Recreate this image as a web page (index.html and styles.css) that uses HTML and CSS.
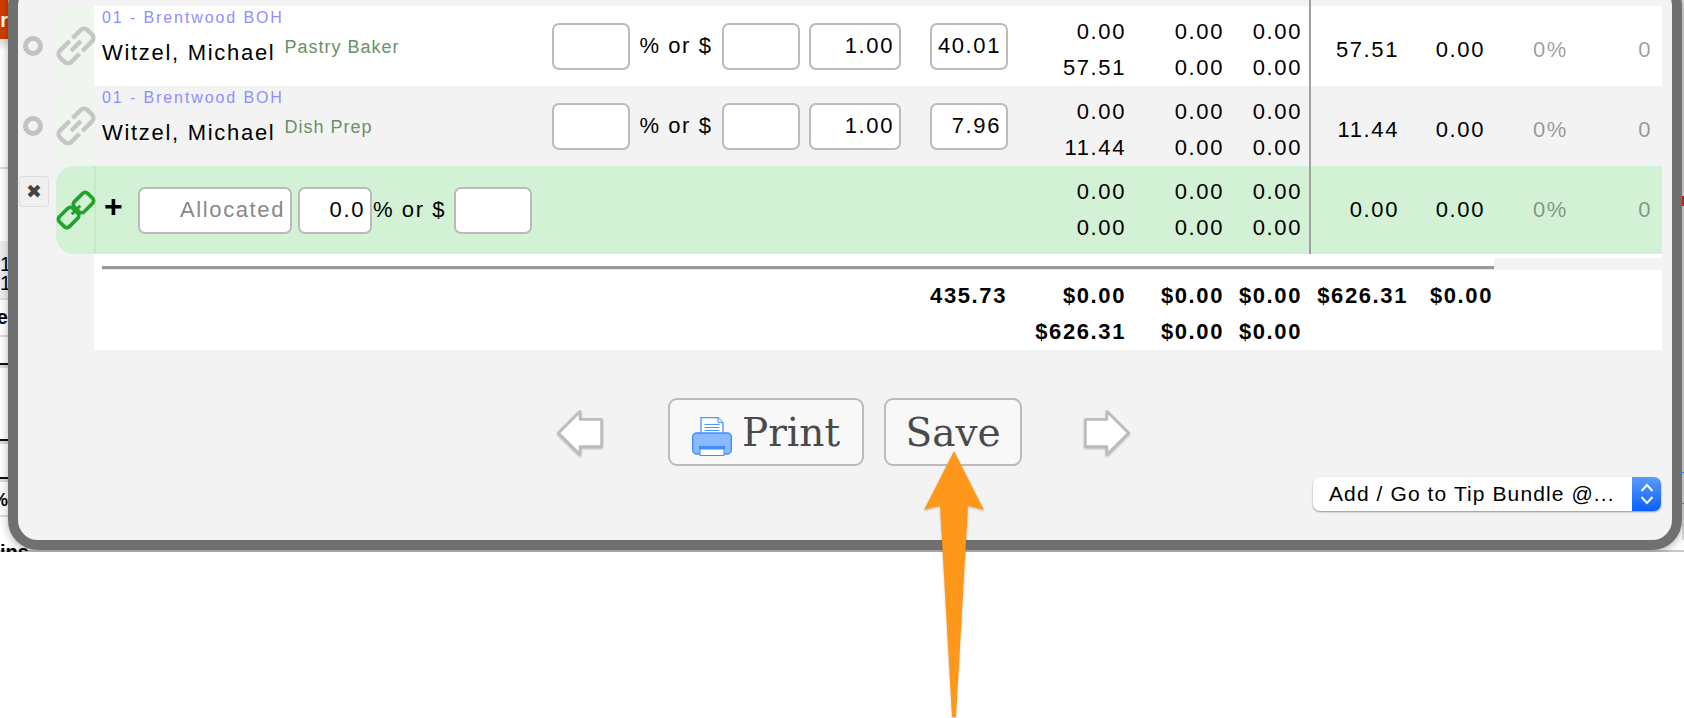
FILE: index.html
```html
<!DOCTYPE html>
<html lang="en">
<head>
  <meta charset="UTF-8" />
  <title>Tip Bundle</title>
  <link rel="stylesheet" href="styles.css">
</head>
<body>
  <!-- page behind the dialog -->
  <div class="page">
    <div class="page-main">
      <div class="strip-left">
        <div class="sl sl-brand">r</div>
        <div class="sl sl-fade"></div>
        <div class="sl sl-blank"></div>
        <div class="sl sl-nums">1<br>1</div>
        <div class="sl sl-head">de</div>
        <div class="sl sl-cell-a"></div>
        <div class="sl sl-cell-b"></div>
        <div class="sl sl-cell-c"></div>
        <div class="sl sl-cell-d"></div>
        <div class="sl sl-pct">%</div>
      </div>
      <div class="strip-right">
        <div class="sr sr-a"></div>
        <div class="sr sr-red"></div>
        <div class="sr sr-b"></div>
        <div class="sr sr-blue"></div>
        <div class="sr sr-c"></div>
      </div>
    </div>
    <div class="page-foot">
      <span class="foot-ins">ins</span>
      <span class="foot-note">Note</span><span class="foot-hrs">Hrs Worked</span>
      <span class="foot-note">Note</span><span class="foot-hrs">Hrs Worked</span>
      <span class="foot-note">Note</span><span class="foot-hrs">Hrs Worked</span>
      <span class="foot-note">Note</span><span class="foot-hrs">Hrs Worked</span>
      <span class="foot-note">Note</span><span class="foot-hrs">Hrs Worked</span>
    </div>

    <!-- dialog -->
    <div class="modal">
      <div class="rows">
        <div class="divider"></div>

        <div class="row">
          <div class="gutter"><span class="radio"></span></div>
          <div class="link-cell">
            <svg class="link-icon" viewBox="0 0 40 40"><g transform="rotate(-45 20 20)" fill="none" stroke="#c6c6c6" stroke-width="4.4" stroke-linecap="butt"><path d="M19 12H5.5a5 5 0 0 0-5 5v6a5 5 0 0 0 5 5H17"/><path d="M21 28h13.500a5 5 0 0 0 5-5v-6a5 5 0 0 0-5-5H23"/><path d="M13 20h14"/></g></svg>
          </div>
          <div class="row-body">
            <div class="who">
              <div class="dept">01 - Brentwood BOH</div>
              <div class="name-line"><span class="name">Witzel, Michael</span><span class="job">Pastry Baker</span></div>
            </div>
            <div class="cell"><input class="box" type="text"></div>
            <div class="cell or">% or $</div>
            <div class="cell"><input class="box" type="text"></div>
            <div class="cell cell-end"><input class="box box-hours" type="text" value="1.00"></div>
            <div class="cell cell-end"><input class="box" type="text" value="40.01"></div>
            <div class="stack"><div>0.00</div><div>57.51</div></div>
            <div class="stack"><div>0.00</div><div>0.00</div></div>
            <div class="stack"><div>0.00</div><div>0.00</div></div>
            <div class="single">57.51</div>
            <div class="single">0.00</div>
            <div class="single muted">0%</div>
            <div class="single muted">0</div>
          </div>
        </div>

        <div class="row row-alt">
          <div class="gutter"><span class="radio"></span></div>
          <div class="link-cell">
            <svg class="link-icon" viewBox="0 0 40 40"><g transform="rotate(-45 20 20)" fill="none" stroke="#c6c6c6" stroke-width="4.4" stroke-linecap="butt"><path d="M19 12H5.5a5 5 0 0 0-5 5v6a5 5 0 0 0 5 5H17"/><path d="M21 28h13.500a5 5 0 0 0 5-5v-6a5 5 0 0 0-5-5H23"/><path d="M13 20h14"/></g></svg>
          </div>
          <div class="row-body">
            <div class="who">
              <div class="dept">01 - Brentwood BOH</div>
              <div class="name-line"><span class="name">Witzel, Michael</span><span class="job">Dish Prep</span></div>
            </div>
            <div class="cell"><input class="box" type="text"></div>
            <div class="cell or">% or $</div>
            <div class="cell"><input class="box" type="text"></div>
            <div class="cell cell-end"><input class="box box-hours" type="text" value="1.00"></div>
            <div class="cell cell-end"><input class="box" type="text" value="7.96"></div>
            <div class="stack"><div>0.00</div><div>11.44</div></div>
            <div class="stack"><div>0.00</div><div>0.00</div></div>
            <div class="stack"><div>0.00</div><div>0.00</div></div>
            <div class="single">11.44</div>
            <div class="single">0.00</div>
            <div class="single muted">0%</div>
            <div class="single muted">0</div>
          </div>
        </div>

        <!-- new allocation row -->
        <div class="row row-new">
          <div class="gutter"><button class="close-btn">&#10006;</button></div>
          <div class="link-cell">
            <svg class="link-icon" viewBox="0 0 40 40"><g transform="rotate(-45 20 20)" fill="none" stroke="#1fa32b" stroke-width="3.6"><rect x="0" y="13" width="19" height="14" rx="3.500"/><rect x="27" y="13" width="19" height="14" rx="3.500" transform="translate(-6 0)"/><path d="M14 20h12" stroke-width="3"/></g></svg>
          </div>
          <div class="row-body">
            <div class="alloc">
              <span class="plus">+</span>
              <input class="box box-alloc" type="text" placeholder="Allocated">
              <input class="box box-pct" type="text" value="0.0">
              <span class="or-tight">% or $</span>
              <input class="box box-last" type="text">
            </div>
            <div class="stack"><div>0.00</div><div>0.00</div></div>
            <div class="stack"><div>0.00</div><div>0.00</div></div>
            <div class="stack"><div>0.00</div><div>0.00</div></div>
            <div class="single">0.00</div>
            <div class="single">0.00</div>
            <div class="single muted">0%</div>
            <div class="single muted">0</div>
          </div>
        </div>
      </div>

      <div class="rule-band"></div>
      <div class="rule-box"><div class="rule"></div></div>

      <div class="totals">
        <div class="t-rate">435.73</div>
        <div>$0.00</div>
        <div>$0.00</div>
        <div>$0.00</div>
        <div>$626.31</div>
        <div>$0.00</div>
        <div class="t-first">$626.31</div>
        <div>$0.00</div>
        <div>$0.00</div>
      </div>

      <div class="actions">
        <svg class="nav-arrow" viewBox="0 0 46 46"><path d="M1.500 23L23 1.500V9.500H44.500V36.500H23V44.500Z"/></svg>
        <button class="btn btn-print">
          <svg class="printer" viewBox="0 0 40 40">
            <path d="M9 .7H26L31 5.700V20H9Z" fill="#fff" stroke="#4b93ff" stroke-width="1.300"/>
            <path d="M26 .7V5.700H31" fill="#dbe9ff" stroke="#4b93ff"/>
            <path d="M12.500 7.500H27.500M12.500 10.500H27.500M12.500 13.500H27.500" stroke="#4b93ff" stroke-width="1"/>
            <rect x=".7" y="16" width="38.600" height="21" rx="4" fill="#8bb9ff" stroke="#3f8cff" stroke-width="1.400"/>
            <rect x="7" y="29" width="26" height="3" fill="#3f8cff"/>
            <rect x="8" y="32" width="24" height="6.500" fill="#fff" stroke="#3f8cff"/>
          </svg>
          Print
        </button>
        <button class="btn btn-save">Save</button>
        <svg class="nav-arrow nav-next" viewBox="0 0 46 46"><path d="M44.500 23L23 1.500V9.500H1.500V36.500H23V44.500Z"/></svg>
      </div>

      <div class="bundle-select">
        <span class="bundle-text">Add / Go to Tip Bundle @...</span>
        <span class="bundle-btn">
          <svg viewBox="0 0 16 26" width="16" height="26"><path d="M2.500 10L8 4L13.500 10M2.500 16L8 22L13.500 16" fill="none" stroke="#fff" stroke-width="2"/></svg>
        </span>
      </div>
    </div>
  </div>

  <!-- annotation arrow pointing at Save -->
  <svg class="callout" viewBox="0 0 64 270"><path d="M33 2L63 61L47 57L35 268H31L19 57L3 61Z"/></svg>
</body>
</html>
```

FILE: styles.css
```css
body {
  margin: 0;
  background: #fff;
  height: 718px;
  overflow: hidden;
  position: relative;
  font-family: "Liberation Sans", Arial, sans-serif;
  color: #000;
}

/* page behind the dialog */
.page {
  position: relative;
  height: 552px;
  overflow: hidden;
  display: flex;
  flex-direction: column;
}
.page-main {
  display: flex;
  justify-content: space-between;
  height: 540px;
}
.strip-left {
  width: 8px;
  overflow: hidden;
}
.sl {
  display: flex;
  justify-content: flex-end;
  box-sizing: border-box;
  white-space: nowrap;
  font-weight: bold;
  font-size: 20px;
}
.sl-brand {
  height: 39px;
  background: #d23c00;
  color: #fff;
  line-height: 40px;
}
.sl-fade {
  height: 12px;
  background: linear-gradient(#ddd, #fff);
}
.sl-blank {
  height: 190px;
  border-top: 0;
  background: linear-gradient(#fff 116px, #ddd 116px, #ddd 118px, #fff 118px);
}
.sl-nums {
  display: block;
  height: 57px;
  background: #eee;
  font-weight: normal;
  line-height: 19px;
  padding-top: 14px;
  text-align: right;
}
.sl-head {
  height: 39px;
  border-top: 2px solid #ddd;
  border-bottom: 2px solid #ddd;
  line-height: 35px;
}
.sl-cell-a {
  height: 28px;
  border-bottom: 2px solid #111;
}
.sl-cell-b {
  height: 76px;
  border-top: 3px solid #ddd;
  border-bottom: 2px solid #111;
}
.sl-cell-c {
  height: 38px;
  border-top: 3px solid #ddd;
  border-bottom: 2px solid #111;
}
.sl-cell-d {
  height: 3px;
  background: #ddd;
}
.sl-pct {
  height: 35px;
  line-height: 36px;
  border-bottom: 2px solid #ddd;
  font-size: 18px;
}
.strip-right {
  width: 2px;
  display: flex;
  flex-direction: column;
}
.sr {
  background: #ddd;
}
.sr-a { height: 196px; }
.sr-red { height: 10px; background: #e0202a; }
.sr-b { height: 266px; }
.sr-blue { height: 30px; border-top: 1px solid #4a90e2; border-bottom: 1px solid #4a90e2; }
.sr-c { flex: 1; }

.page-foot {
  height: 12px;
  display: flex;
  overflow: hidden;
  background: linear-gradient(#fff 10px, #c8c8c8 10px);
  font-weight: bold;
  font-size: 18px;
  white-space: nowrap;
}
.foot-ins {
  width: 207px;
  flex: none;
  font-size: 20px;
  line-height: 24px;
}
.foot-note {
  width: 86px;
  flex: none;
  padding-top: 8px;
  line-height: 22px;
}
.foot-hrs {
  width: 220px;
  flex: none;
  padding-top: 8px;
  line-height: 22px;
  font-weight: normal;
}

/* dialog */
.modal {
  position: absolute;
  left: 8px;
  top: -24px;
  width: 1674px;
  height: 574px;
  box-sizing: border-box;
  border: 10px solid #707070;
  border-radius: 30px;
  background: #f3f3f3;
  padding-top: 20px;
  box-shadow: 0 2px 8px rgba(0, 0, 0, .3);
}
.rows {
  position: relative;
}
.divider {
  position: absolute;
  left: 1291px;
  top: -6px;
  bottom: 0;
  width: 1px;
  border-left: 2px solid #a0a0a0;
}
.row {
  display: flex;
  height: 80px;
}
.gutter {
  width: 38px;
  flex: none;
  box-sizing: border-box;
  padding: 30px 0 0 5px;
}
.radio {
  display: block;
  width: 20px;
  height: 20px;
  box-sizing: border-box;
  border: 5px solid #c2c2c2;
  border-radius: 50%;
}
.link-cell {
  width: 38px;
  flex: none;
  border-radius: 18px 0 0 18px;
  background: #eef6ee;
  box-sizing: border-box;
  padding-top: 20px;
}
.link-icon {
  display: block;
  width: 40px;
  height: 40px;
  position: relative;
}
.row-body {
  width: 1568px;
  flex: none;
  display: grid;
  grid-template-columns: 458px 78px 92px 78px 101px 107px 118px 98px 78px 97px 86px 83px 84px 10px;
  background: #fff;
  font-size: 22px;
  letter-spacing: 1.6px;
}
.row-alt .row-body {
  background: #f3f3f3;
}

.who {
  padding-left: 8px;
}
.dept {
  color: #8f8fff;
  font-size: 16px;
  line-height: 24px;
  letter-spacing: 1.9px;
}
.name-line {
  display: flex;
  margin-top: 8px;
}
.name {
  line-height: 30px;
  letter-spacing: 1.7px;
}
.job {
  color: #6a8f6a;
  font-size: 18px;
  line-height: 20px;
  letter-spacing: 1px;
  margin: -1px 0 0 9px;
}

.cell {
  display: flex;
  align-items: center;
}
.cell-end {
  justify-content: flex-end;
}
.or {
  justify-content: center;
}
.box {
  width: 78px;
  height: 47px;
  box-sizing: border-box;
  border: 2px solid #bbb;
  border-radius: 7px;
  background: #fff;
  padding: 0 5px;
  text-align: right;
  font: inherit;
  letter-spacing: inherit;
  color: #000;
  outline: none;
}
.box::placeholder {
  color: #888;
  opacity: 1;
}
.box-hours {
  width: 92px;
}

.stack {
  padding-top: 8px;
  text-align: right;
  line-height: 36px;
}
.single {
  padding-top: 26px;
  text-align: right;
  line-height: 36px;
}
.muted {
  color: rgba(0, 0, 0, .4);
}

/* new allocation row */
.row-new {
  height: 88px;
}
.row-new .gutter {
  padding: 10px 0 0 1px;
}
.close-btn {
  display: block;
  width: 30px;
  height: 31px;
  padding: 0;
  border: 1px solid #ddd;
  border-radius: 3px;
  background: #f0f0f0;
  color: #444;
  font-size: 19px;
  font-family: "DejaVu Sans", sans-serif;
  line-height: 29px;
}
.row-new .link-cell {
  background: #d3f1d4;
  padding-top: 24px;
}
.row-new .row-body {
  background: #d3f1d4;
  border-left: 2px solid #c2edc4;
  box-sizing: border-box;
  grid-template-columns: 912px 118px 98px 78px 97px 86px 83px 84px 10px;
}
.alloc {
  display: flex;
  align-items: center;
}
.plus {
  width: 42px;
  flex: none;
  box-sizing: border-box;
  padding-left: 8px;
  font-size: 32px;
  font-weight: bold;
  letter-spacing: 0;
  margin-top: -8px;
}
.box-alloc {
  width: 154px;
}
.box-pct {
  width: 74px;
  margin-left: 6px;
}
.or-tight {
  width: 82px;
  flex: none;
  padding-left: 1px;
  box-sizing: border-box;
}
.box-last {
  width: 78px;
}

/* totals */
.rule-band {
  height: 4px;
  width: 1568px;
  margin-left: 76px;
  background: #fff;
}
.rule-box {
  height: 12px;
  width: 1400px;
  margin-left: 76px;
  box-sizing: border-box;
  padding: 8px 0 0 8px;
  background: #fff;
}
.rule {
  height: 3px;
  background: #999;
  border-bottom: 1px solid #e8e8e8;
}
.totals {
  width: 1568px;
  height: 80px;
  margin-left: 76px;
  box-sizing: border-box;
  padding-top: 8px;
  background: #fff;
  display: grid;
  grid-template-columns: 913px 119px 98px 78px 106px 85px;
  grid-auto-rows: 36px;
  font-size: 22px;
  font-weight: bold;
  letter-spacing: 1.6px;
  line-height: 36px;
  text-align: right;
}
.t-first {
  grid-column: 2;
}

/* buttons */
.actions {
  display: flex;
  align-items: flex-start;
  margin-top: 48px;
  padding-left: 539px;
  height: 68px;
}
.nav-arrow {
  width: 46px;
  height: 46px;
  margin-top: 12px;
  flex: none;
  filter: drop-shadow(0 1px 1px rgba(0, 0, 0, .3));
}
.nav-arrow path {
  fill: #fff;
  stroke: #bbb;
  stroke-width: 2.5;
  stroke-linejoin: round;
}
.nav-next {
  margin-left: 62px;
}
.btn {
  height: 68px;
  box-sizing: border-box;
  border: 2px solid #bbb;
  border-radius: 9px;
  background: #f8f8f8;
  color: #4a4a4a;
  font-family: "DejaVu Serif", serif;
  font-size: 39px;
  padding: 0;
  display: flex;
  align-items: center;
  justify-content: center;
  flex: none;
}
.btn-print {
  width: 196px;
  margin-left: 65px;
  gap: 10px;
}
.btn-save {
  width: 138px;
  margin-left: 20px;
}
.printer {
  width: 40px;
  height: 40px;
  flex: none;
  margin-top: 10px;
}

.bundle-select {
  display: flex;
  align-items: center;
  justify-content: space-between;
  width: 348px;
  height: 34px;
  margin: 11px 0 0 auto;
  position: relative;
  right: 11px;
  box-sizing: border-box;
  border-radius: 7px;
  background: #fff;
  box-shadow: 0 1px 2px rgba(0, 0, 0, .4);
  font-size: 21px;
  letter-spacing: 1.1px;
}
.bundle-text {
  padding-left: 16px;
  white-space: nowrap;
}
.bundle-btn {
  width: 29px;
  height: 34px;
  display: flex;
  align-items: center;
  justify-content: center;
  border-radius: 0 7px 7px 0;
  background: linear-gradient(#5a9bfb, #0a5fff);
}

/* annotation arrow */
.callout {
  position: absolute;
  left: 920px;
  top: 449px;
  width: 66px;
  height: 270px;
  filter: drop-shadow(0 1px 1px rgba(0, 0, 0, .2));
}
.callout path {
  fill: #ff981a;
}
```
